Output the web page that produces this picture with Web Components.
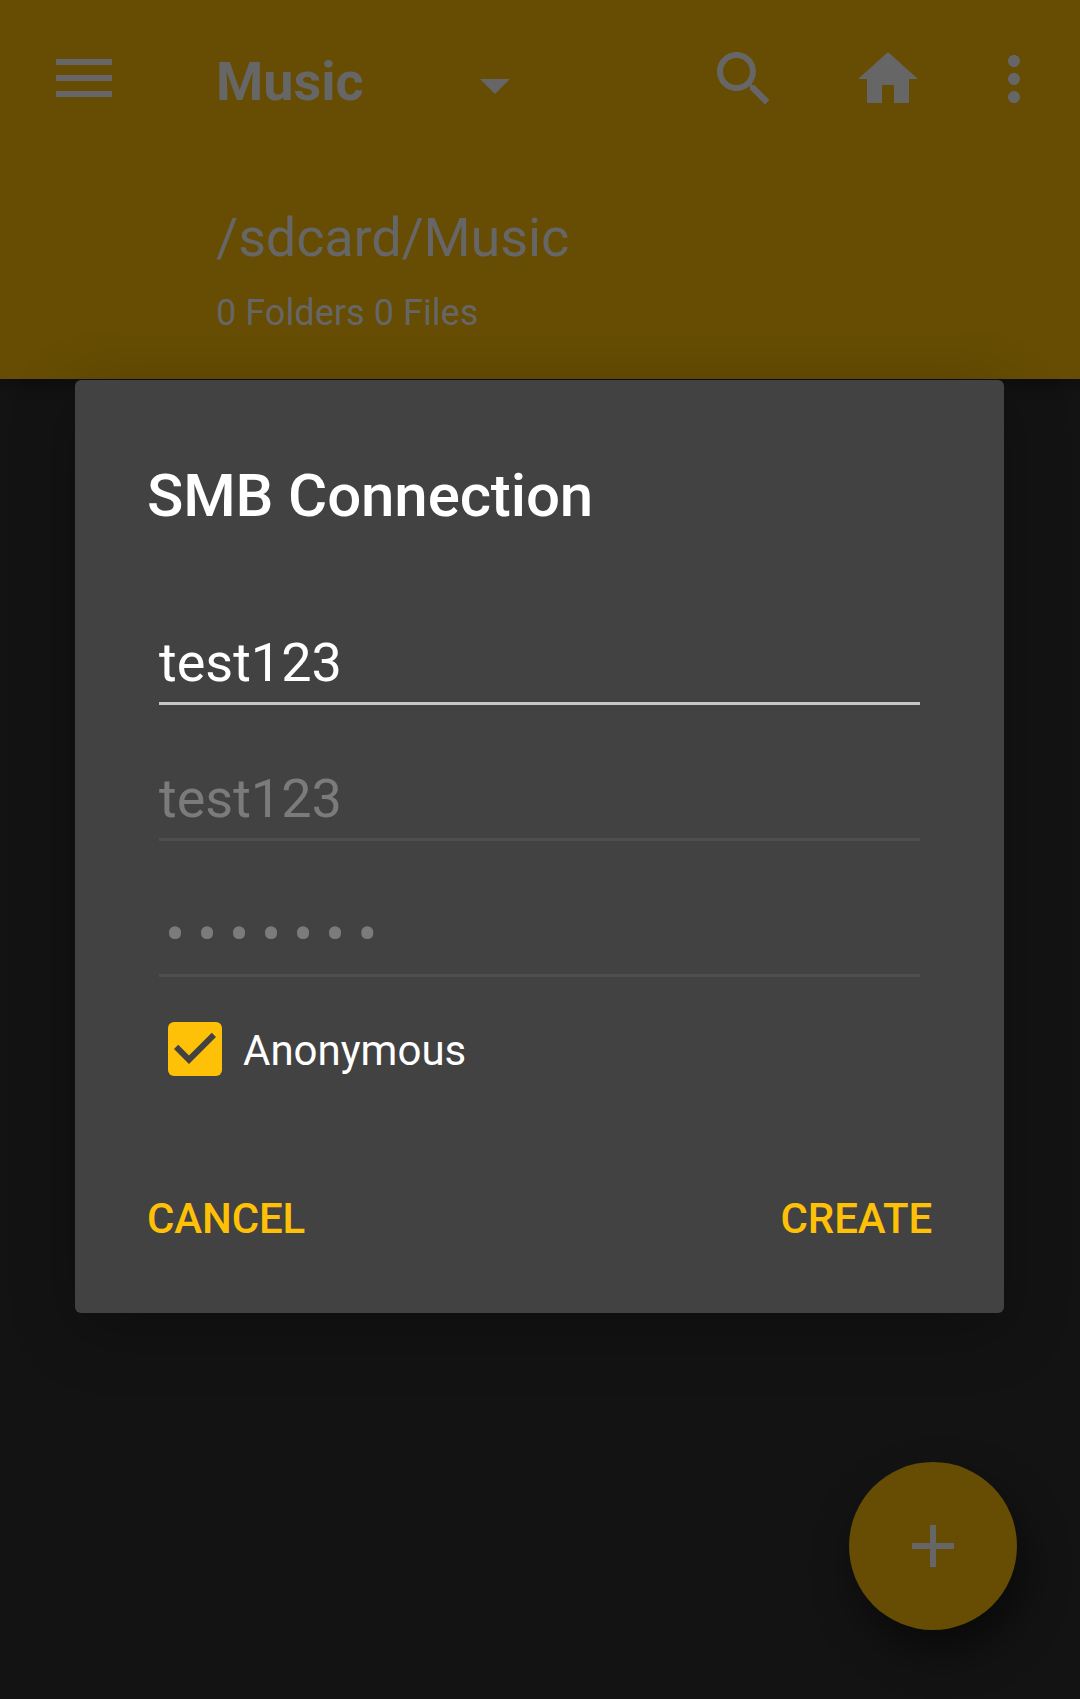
<!DOCTYPE html>
<html lang="en">
<head>
<meta charset="utf-8">
<title>SMB Connection</title>
<style>
  html, body { margin: 0; height: 100%; background: #131313; }
  body { font-family: Roboto, "Liberation Sans", sans-serif; overflow: hidden; }
</style>
</head>
<body>
<file-app></file-app>
<script>
const define = (name, html) => customElements.define(name, class extends HTMLElement {
  constructor() {
    super();
    const t = document.createElement('template');
    t.innerHTML = html;
    this.attachShadow({ mode: 'open' }).append(t.content.cloneNode(true));
  }
});

const ICONS = {
  search: 'M15.5 14h-.79l-.28-.27C15.41 12.59 16 11.11 16 9.5 16 5.91 13.09 3 9.5 3S3 5.91 3 9.5 5.91 16 9.5 16c1.61 0 3.09-.59 4.23-1.57l.27.28v.79l5 4.99L20.49 19l-4.99-5zm-6 0C7.01 14 5 11.99 5 9.5S7.01 5 9.5 5 14 7.01 14 9.5 11.99 14 9.5 14z',
  home: 'M10 20v-6h4v6h5v-8h3L12 3 2 12h3v8z',
  more: 'M12 8c1.1 0 2-.9 2-2s-.9-2-2-2-2 .9-2 2 .9 2 2 2zm0 2c-1.1 0-2 .9-2 2s.9 2 2 2 2-.9 2-2-.9-2-2-2zm0 6c-1.1 0-2 .9-2 2s.9 2 2 2 2-.9 2-2-.9-2-2-2z',
  drop: 'M7 10l5 5 5-5z',
  plus: 'M19 13h-6v6h-2v-6H5v-2h6V5h2v6h6z',
  check: 'M10 17l-5-5 1.41-1.41L10 14.17l7.59-7.59L19 8z'
};

customElements.define('ui-icon', class extends HTMLElement {
  connectedCallback() {
    if (this.shadowRoot) return;
    this.attachShadow({ mode: 'open' }).innerHTML = `
      <style>:host{display:block;flex:none;width:72px;height:72px} svg{display:block;width:100%;height:100%}</style>
      <svg viewBox="0 0 24 24" fill="currentColor"><path d="${ICONS[this.getAttribute('name')]}"/></svg>`;
  }
});

define('menu-icon', `
  <style>
    :host { display: flex; flex-direction: column; gap: 10px; width: 56px; flex: none; }
    i { height: 6px; background: currentColor; }
  </style><i></i><i></i><i></i>`);

define('app-header', `
  <style>
    :host { display: flex; flex-direction: column; box-sizing: border-box; height: 379px;
      padding: 43px 30px 0 56px; background: #664d03; color: #666;
      box-shadow: 0 6px 12px rgba(0,0,0,.3); }
    .bar { display: flex; height: 72px; }
    menu-icon { margin: 16px 104px 0 0; }
    .title { font: 700 54px/63px Roboto, sans-serif; width: 243px; margin-top: 7px; }
    .drop { margin-top: 6px; }
    .actions { display: flex; margin-left: auto; }
    .actions ui-icon + ui-icon { margin-left: 72px; }
    .actions ui-icon:last-child { margin-left: 54px; }
    .path { font-size: 54px; line-height: 63px; margin: 91px 0 0 160px; letter-spacing: -.15px; }
    .count { font-size: 36px; line-height: 42px; margin: 23px 0 0 160px; letter-spacing: .06px; }
  </style>
  <div class="bar">
    <menu-icon></menu-icon>
    <div class="title"><slot name="title"></slot></div>
    <ui-icon class="drop" name="drop"></ui-icon>
    <div class="actions"><ui-icon name="search"></ui-icon><ui-icon name="home"></ui-icon><ui-icon name="more"></ui-icon></div>
  </div>
  <div class="path"><slot name="path"></slot></div>
  <div class="count"><slot name="count"></slot></div>`);

define('add-button', `
  <style>
    :host { position: absolute; right: 63px; bottom: 69px; width: 168px; height: 168px;
      display: flex; align-items: center; justify-content: center; border-radius: 50%;
      background: #664d03; color: #666; box-shadow: 8px 22px 40px rgba(0,0,0,.5); }
  </style><ui-icon name="plus"></ui-icon>`);

define('text-field', `
  <style>
    :host { display: block; box-sizing: border-box; height: 74px; border-bottom: 3px solid #c6c6c6;
      color: #fff; font-size: 54px; line-height: 63px; }
    :host([disabled]) { color: #7b7b7b; border-color: #4e4e4e; }
    :host([password]) { font-size: 60px; letter-spacing: 11.8px; text-indent: 5.9px; }
  </style><slot></slot>`);

define('check-box', `
  <style>
    :host { display: flex; align-items: center; height: 54px; gap: 21px; color: #fff; font-size: 42px; line-height: 49px; }
    .box { display: flex; align-items: center; justify-content: center; width: 54px; height: 54px;
      border-radius: 6px; background: #ffc107; color: #424242; }
    .label { margin-top: 2px; }
  </style>
  <div class="box"><ui-icon name="check"></ui-icon></div><div class="label"><slot></slot></div>`);

define('flat-button', `
  <style>:host { display: block; color: #ffc107; font: 500 42px/49px Roboto, sans-serif; letter-spacing: -.12px; }</style><slot></slot>`);

define('connection-dialog', `
  <style>
    :host { position: absolute; top: 380px; left: 75px; width: 929px; height: 933px; box-sizing: border-box;
      display: flex; flex-direction: column; padding: 81px 72px 70px; border-radius: 6px;
      background: #424242; box-shadow: 0 16px 64px rgba(0,0,0,.26); }
    .title { color: #fff; font-size: 60px; font-weight: 500; line-height: 70px; letter-spacing: -.12px; }
    .fields { display: flex; flex-direction: column; gap: 62px; margin: 100px 12px 0; }
    .option { margin: 45px 0 0 21px; }
    .actions { display: flex; justify-content: space-between; margin-top: auto; }
  </style>
  <div class="title"><slot name="title"></slot></div>
  <div class="fields"><slot></slot></div>
  <div class="option"><slot name="option"></slot></div>
  <div class="actions"><slot name="actions"></slot></div>`);

define('file-app', `
  <style>
    :host { display: block; position: relative; width: 1080px; height: 1699px; overflow: hidden; background: #131313; }
  </style>
  <app-header>
    <span slot="title">Music</span>
    <span slot="path">/sdcard/Music</span>
    <span slot="count">0 Folders 0 Files</span>
  </app-header>
  <add-button></add-button>
  <connection-dialog>
    <span slot="title">SMB Connection</span>
    <text-field>test123</text-field>
    <text-field disabled>test123</text-field>
    <text-field disabled password>•••••••</text-field>
    <check-box slot="option">Anonymous</check-box>
    <flat-button slot="actions">CANCEL</flat-button>
    <flat-button slot="actions">CREATE</flat-button>
  </connection-dialog>`);
</script>
</body>
</html>
